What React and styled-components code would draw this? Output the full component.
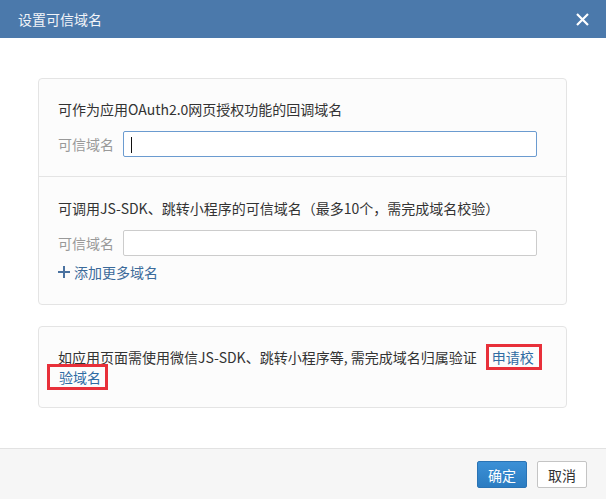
import React from "react";
import styled, { createGlobalStyle } from "styled-components";

const GlobalStyle = createGlobalStyle`
  html, body {
    margin: 0;
    padding: 0;
    background: #fff;
    overflow: hidden;
  }
  body {
    font-family: "Noto Sans CJK SC", "Microsoft YaHei", sans-serif;
    font-size: 14px;
    color: #333;
  }
`;

const Dialog = styled.div`
  width: 606px;
  height: 499px;
  display: flex;
  flex-direction: column;
  background: #fff;
`;

const Header = styled.div`
  height: 38px;
  flex: none;
  display: flex;
  align-items: center;
  justify-content: space-between;
  padding: 0 17px 0 18px;
  background: #4b79ab;
  color: #f2f4f8;
  font-size: 14px;
`;

const CloseButton = styled.button`
  width: 14px;
  height: 14px;
  padding: 0;
  border: none;
  background: none;
  cursor: pointer;
  display: flex;
  align-items: center;
  justify-content: center;
  margin-top: 1px;
`;

const Body = styled.div`
  flex: 1;
  padding: 40px 39px 0 38px;
  display: flex;
  flex-direction: column;
  gap: 21px;
`;

const Card = styled.div`
  background: #fcfcfc;
  border: 1px solid #e4e4e4;
  border-radius: 4px;
`;

const Section = styled.div`
  padding: ${p => p.$pad || "20px 19px 19px"};
  display: flex;
  flex-direction: column;
  & + & {
    border-top: 1px solid #e4e4e4;
  }
`;

const Heading = styled.div`
  line-height: 20px;
  color: #333;
  margin-bottom: 12px;
`;

const Row = styled.div`
  display: flex;
  align-items: center;
  gap: 9px;
`;

const Label = styled.span`
  color: #999;
  line-height: 20px;
  flex: none;
`;

const InputWrap = styled.div`
  position: relative;
  flex: 1;
  display: flex;
  margin-right: 10px;
`;

const Input = styled.input`
  flex: 1;
  height: 26px;
  box-sizing: border-box;
  border: 1px solid ${p => (p.$focused ? "#6b9bd0" : "#cccccc")};
  border-radius: 2px;
  background: #fff;
  outline: none;
  padding: 0 8px;
  font: inherit;
`;

const Caret = styled.span`
  position: absolute;
  left: 8px;
  top: 6px;
  width: 1px;
  height: 16px;
  background: #111;
`;

const AddLink = styled.a`
  display: flex;
  align-items: center;
  gap: 4px;
  margin-top: 6px;
  line-height: 20px;
  color: #3b6a9a;
  text-decoration: none;
  cursor: pointer;
`;

const Notice = styled.div`
  padding: 20px 19px 20px;
  line-height: 20px;
  color: #333;
`;

const Marked = styled.a`
  color: #2f6ba3;
  text-decoration: none;
  border: 3px solid #e8303a;
  padding: ${p => p.$pad};
  margin-left: ${p => p.$ml};
  cursor: pointer;
`;

const Footer = styled.div`
  flex: none;
  height: 51px;
  box-sizing: border-box;
  border-top: 1px solid #e2e2e2;
  background: #f6f6f6;
  display: flex;
  align-items: center;
  justify-content: flex-end;
  gap: 10px;
  padding: 0 19px 0 0;
`;

const Button = styled.button`
  width: 50px;
  height: 27px;
  box-sizing: border-box;
  border-radius: 2px;
  font: inherit;
  font-size: 14px;
  cursor: pointer;
  padding: 0;
  margin-top: 1px;
  border: 1px solid ${p => (p.$primary ? "#2a73b4" : "#c4c4c4")};
  background: ${p =>
    p.$primary ? "linear-gradient(#3c90d6, #2b7cc1)" : "#fff"};
  color: ${p => (p.$primary ? "#fff" : "#333")};
`;

export default function App() {
  return (
    <Dialog>
      <GlobalStyle />
      <Header>
        <span>设置可信域名</span>
        <CloseButton>
          <svg width="13" height="13" viewBox="0 0 13 13">
            <path d="M1 1L12 12M12 1L1 12" stroke="#fff" strokeWidth="2.2" />
          </svg>
        </CloseButton>
      </Header>
      <Body>
        <Card>
          <Section>
            <Heading>可作为应用OAuth2.0网页授权功能的回调域名</Heading>
            <Row>
              <Label>可信域名</Label>
              <InputWrap>
                <Input $focused />
                <Caret />
              </InputWrap>
            </Row>
          </Section>
          <Section $pad="21px 19px 22px">
            <Heading>可调用JS-SDK、跳转小程序的可信域名（最多10个，需完成域名校验）</Heading>
            <Row>
              <Label>可信域名</Label>
              <InputWrap>
                <Input />
              </InputWrap>
            </Row>
            <AddLink>
              <svg width="12" height="12" viewBox="0 0 12 12">
                <path d="M6 0V12M0 6H12" stroke="#4a72a0" strokeWidth="2" />
              </svg>
              添加更多域名
            </AddLink>
          </Section>
        </Card>
        <Card>
          <Notice>
            如应用页面需使用微信JS-SDK、跳转小程序等, 需完成域名归属验证
            <Marked $pad="0 5px 0 3px" $ml="9px">申请校</Marked>
            <br />
            <Marked $pad="0 4px 0 9px" $ml="-11px">验域名</Marked>
          </Notice>
        </Card>
      </Body>
      <Footer>
        <Button $primary>确定</Button>
        <Button>取消</Button>
      </Footer>
    </Dialog>
  );
}
